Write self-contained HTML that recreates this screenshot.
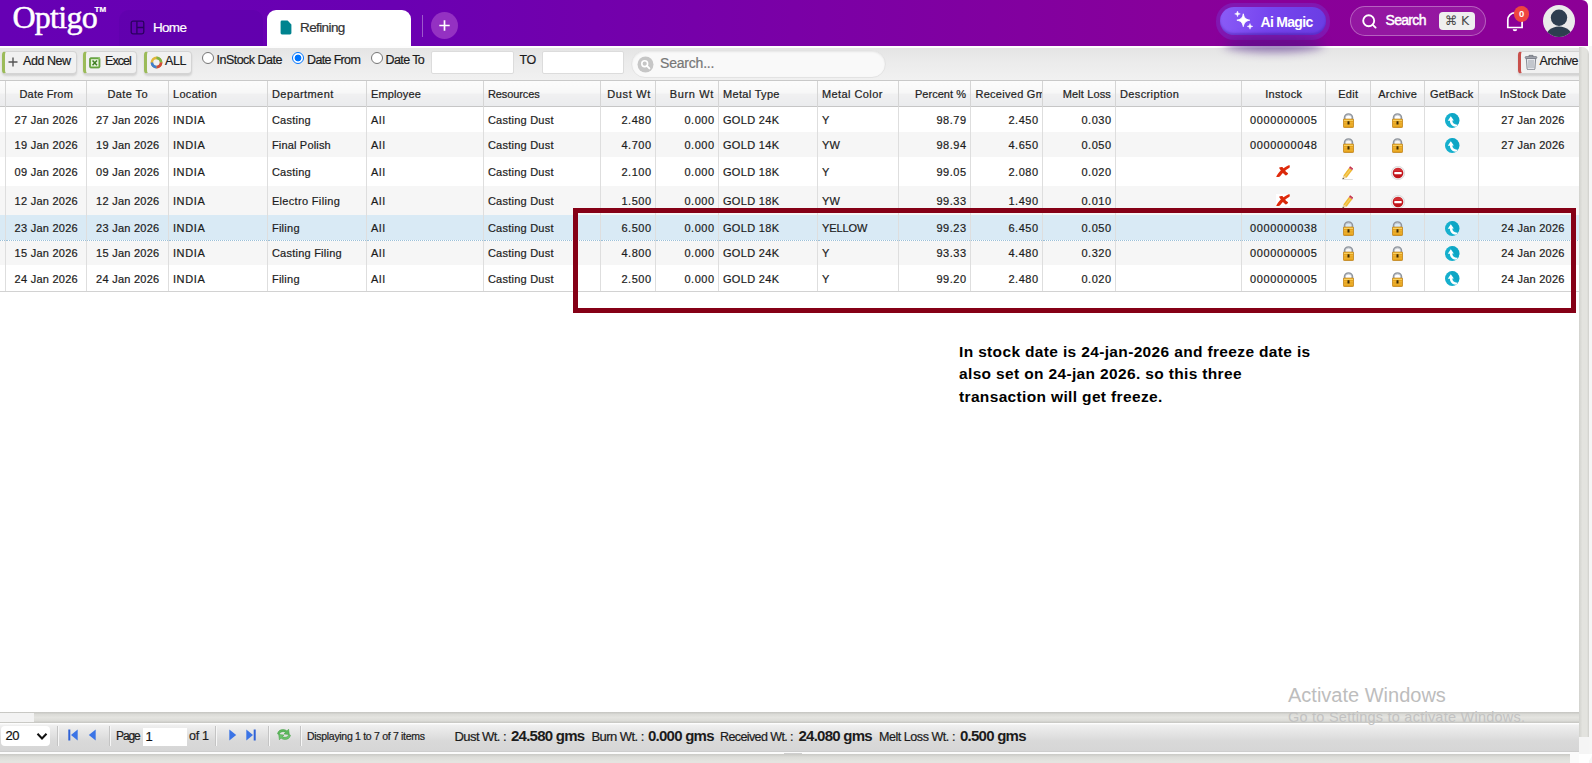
<!DOCTYPE html>
<html lang="en">
<head>
<meta charset="utf-8">
<title>Optigo - Refining</title>
<style>
*{box-sizing:border-box}
html,body{margin:0;padding:0}
body{width:1592px;height:763px;overflow:hidden;position:relative;background:#fff;font-family:"Liberation Sans",sans-serif;font-size:12px;color:#1c1c1c;letter-spacing:-0.28px;-webkit-text-stroke-width:0.2px}
.abs{position:absolute}
#hdr{position:absolute;left:0;top:0;width:1588px;height:46px;border-radius:0 6px 0 0;background:linear-gradient(90deg,#6600b4 0%,#6a00b2 25%,#7a00a6 50%,#88009a 75%,#8c0096 100%)}
#logo{position:absolute;left:12.500px;top:-5px;font-family:"Liberation Serif",serif;font-size:32px;color:#fff;letter-spacing:-0.75px;line-height:44px;-webkit-text-stroke:0.5px #fff}
#tm{position:absolute;left:94.500px;top:5px;font-size:8px;color:#fff;letter-spacing:0;font-weight:bold}
#hometab{position:absolute;left:119px;top:10px;width:144px;height:36px;background:rgba(80,0,160,.25);border-radius:10px 10px 0 0}
#hometxt{position:absolute;left:153px;top:20px;color:#fff;font-size:13.5px;letter-spacing:-0.7px;-webkit-text-stroke:0.2px #fff}
#reftab{position:absolute;left:267px;top:10px;width:144px;height:36px;background:#fff;border-radius:9px 9px 0 0}
#reftxt{position:absolute;left:300px;top:19.500px;color:#333;font-size:13.5px;letter-spacing:-0.6px}
#sep{position:absolute;left:422px;top:15px;width:1px;height:22px;background:rgba(255,255,255,.35)}
#plus{position:absolute;left:431px;top:12px;width:27px;height:27px;border-radius:50%;background:#9431c2}
#tb{position:absolute;left:0;top:46px;width:1579px;height:35px;background:linear-gradient(#e2e2e2 0,#e4e4e4 2px,#ebebeb 45%,#f1f1f1 100%);border-bottom:1px solid #c9c9c9}
.btn{position:absolute;top:50.500px;height:23px;background:#f1f1f1;border:1px solid #d4d4d4;border-left:3px solid #9bbb59;border-radius:4px;box-shadow:0 2px 2px rgba(0,0,0,.12);font-size:12.5px;line-height:20px;color:#1c1c1c;white-space:nowrap;letter-spacing:-0.45px}
.radio{position:absolute;top:52px;width:12px;height:12px;border:1px solid #767676;border-radius:50%;background:#fff}
.rlbl{position:absolute;top:52.500px;font-size:12.5px;color:#1c1c1c;white-space:nowrap;letter-spacing:-0.45px}
.inp{position:absolute;top:51px;height:23px;background:#fff;border:1px solid #dcdcdc;border-radius:2px}
#grid{position:absolute;left:0;top:81px;width:1579px;overflow:hidden}
table{border-collapse:collapse;table-layout:fixed;width:1586px}
th{height:26px;font-weight:normal;font-size:11px;color:#222;text-align:left;padding:.5px 0 0 4.500px;border-left:1px solid #d5d5d5;background:linear-gradient(#fcfcfc 0%,#f7f7f7 45%,#f0f0f1 52%,#eaebed 100%);box-shadow:inset 0 -1px 0 #c6c6c6;white-space:nowrap;overflow:hidden}
td{height:25px;padding:0 0 0 4.400px;border-left:1px solid #dedede;white-space:nowrap;overflow:hidden;font-size:11px}
th.c,td.c{text-align:center;padding:0 0 0 1.500px}
th.c{padding-top:.5px}
th.r,td.r{text-align:right;padding:0 3px 0 0}
th.r{padding:.5px 3.500px 0 0}
tr.alt td{background:#f6f6f6}
tr.sel td{background:#d9eaf5;border-bottom:1px dotted #9cc0d8;padding-top:2px}
tr.r6 td{padding-top:1px}
tr.tall td{height:29px}
tr.last td{height:26px;border-bottom:1px solid #d2d2d2;padding-top:2px}
th.rg{text-align:left;padding:.5px 0 0 5px}
#redbox{position:absolute;left:573px;top:208px;width:1003px;height:105px;border:5px solid #850016}
#note{position:absolute;left:959px;top:341px;font-family:"Liberation Sans",sans-serif;font-weight:bold;font-size:15.5px;line-height:22.4px;color:#000;letter-spacing:0.35px;white-space:nowrap;-webkit-text-stroke:0}
#vscroll{position:absolute;left:1579px;top:47px;width:10px;height:690px;background:linear-gradient(90deg,#d2d2ce 0,#e3e3df 35%,#e3e3df 80%,#cfcfcb 100%);border-radius:0 7px 0 0}
#hscroll{position:absolute;left:0;top:712px;width:1579px;height:11px;background:linear-gradient(#c4c4c0 0,#dbdbd7 22%,#e4e4e0 50%,#dcdcd8 78%,#c5c5c1 100%)}
#hthumb{position:absolute;left:0;top:713px;width:34px;height:9px;background:#f3f3f3}
#pager{position:absolute;left:0;top:723px;width:1579px;height:29px;background:linear-gradient(#fff 0,#fbfbfb 1px,#f0f0f0 2px,#e6e6e6 30%,#d9d9d9 62%,#d6d6d6 95%,#c9c9c9 100%)}
#bottom{position:absolute;left:0;top:752px;width:1579px;height:11px;background:#fbfbfb}
#bottom2{position:absolute;left:0;top:753.500px;width:1570px;height:10px;background:linear-gradient(#c8c8c4 0,#dcdcd8 30%,#e4e4e0 75%,#e4e4e0)}
#rstrip{position:absolute;left:1589px;top:46px;width:3px;height:717px;background:#f6f6f6}
.pt{position:absolute;white-space:nowrap}
.ic{display:block;margin:0 auto}
td.i{padding:1px 0 0 0}
td.f,th.f{border-left:none;padding:0}
svg.ic{position:relative}svg.lock{width:11px;height:15px;top:.4px;left:.5px}svg.gb{top:0;left:1.500px}svg.pen{top:.7px}svg.del{top:1px;left:1px}svg.xx{top:-1px;left:-.5px}svg.gb{width:14.400px;height:15px}svg.xx{width:14px;height:12.200px}svg.pen{width:11px;height:14px}svg.del{width:14px;height:14px}
#aihalo{position:absolute;left:1216px;top:3px;width:114px;height:36.500px;border-radius:18px;background:rgba(120,55,210,.42)}
#ai{position:absolute;left:1220px;top:7px;width:106px;height:28px;border-radius:14px;background:linear-gradient(100deg,#8b5cf6 0%,#7645ef 45%,#6a3de3 100%);box-shadow:inset 0 -2px 2px rgba(60,20,160,.35)}
#aitxt{position:absolute;left:40.500px;top:6.500px;color:#fff;font-weight:bold;font-size:14px;letter-spacing:-0.7px;white-space:nowrap;-webkit-text-stroke:0}
#aishadow{position:absolute;left:1224px;top:37px;width:100px;height:15px;border-radius:50%;background:rgba(70,20,130,.55);filter:blur(5px)}
#srch{position:absolute;left:1350px;top:6px;width:136px;height:30px;border-radius:15px;border:1px solid rgba(255,255,255,.32);background:rgba(255,255,255,.09)}
#srchtxt{position:absolute;left:34.500px;top:5px;color:#fff;font-size:14px;letter-spacing:-0.68px;white-space:nowrap;-webkit-text-stroke:0.45px #fff}
#kbd{position:absolute;left:88px;top:4.500px;width:36px;height:18px;border-radius:4px;background:#efefef;color:#4a4a4a;font-size:12.500px;line-height:18px;text-align:center;letter-spacing:-0.3px;-webkit-text-stroke:0;white-space:nowrap;font-family:"DejaVu Sans","Liberation Sans",sans-serif}
#badge{position:absolute;left:1514px;top:6.400px;width:15.200px;height:15.200px;border-radius:50%;background:#ee4540;color:#fff;font-weight:bold;font-size:9.500px;line-height:15px;text-align:center;letter-spacing:0;-webkit-text-stroke:0}
#hline{position:absolute;left:0;top:46px;width:1589px;height:2px;background:#fdfdfd}
.btn.red{border-left-color:#c9504c;border-radius:4px 0 0 4px}
.btn span{line-height:19px}
.radio.on{border:1px solid #0075ff;background:radial-gradient(circle,#0075ff 0,#0075ff 3.100px,#fff 3.700px)}
#sbox{position:absolute;left:630.500px;top:50px;width:255px;height:27.500px;border-radius:14px;background:#f9f9f9;border:1px solid #e3e3e3;box-shadow:inset 0 1px 2px rgba(0,0,0,.08)}
#sboxtxt{position:absolute;left:28.500px;top:4px;color:#777;font-size:14px;letter-spacing:-0.2px;white-space:nowrap}
#psel{position:absolute;left:1px;top:725.500px;width:49px;height:20.500px;background:#fff;border-radius:4px;font-size:13px;letter-spacing:-0.6px;color:#111}
.psep{position:absolute;top:726px;width:1px;height:20px;background:#c4c4c4;box-shadow:1px 0 0 #f6f6f6}
#pinp{position:absolute;left:142.500px;top:728px;width:44px;height:18px;background:#fff;font-size:13px;color:#111}
.pt{color:#1c1c1c;letter-spacing:-0.45px}
.pt.b{font-weight:bold;font-size:15px;letter-spacing:-0.75px;-webkit-text-stroke:0}
#aw1{position:absolute;left:1288px;top:684px;font-size:20px;color:#bdbdbd;letter-spacing:0;white-space:nowrap;-webkit-text-stroke:0}
#aw2{position:absolute;left:1288px;top:709px;font-size:14.5px;color:#c2c2c2;letter-spacing:0.24px;white-space:nowrap;-webkit-text-stroke:0}
#corner{position:absolute;left:1579px;top:737px;width:10px;height:17px;background:#f5f5f5}
#corner2{position:absolute;left:1579px;top:754px;width:13px;height:9px;background:#fff;border-radius:0 0 9px 0}
#bhandle{position:absolute;left:784px;top:752.500px;width:18px;height:1.500px;background:#cfcfcf}
</style>
</head>
<body>
<div id="hdr"></div>
<div id="logo">Optigo</div><div id="tm">TM</div>
<div id="hometab"></div>
<svg class="abs" style="left:130px;top:20px" width="15" height="15" viewBox="0 0 15 15"><rect x="1.2" y="1.2" width="12.600" height="12.600" rx="1.800" fill="none" stroke="#2b0060" stroke-width="1.300"/><path d="M6.900 1.200v12.600M6.900 7.500h6.900" fill="none" stroke="#2b0060" stroke-width="1.300"/></svg>
<div id="hometxt">Home</div>
<div id="reftab"></div>
<svg class="abs" style="left:280px;top:20px" width="12" height="15" viewBox="0 0 12 15"><path d="M2 .6h5.600L11.400 4.400V13a1.400 1.400 0 0 1-1.400 1.400H2A1.400 1.400 0 0 1 .6 13V2A1.400 1.400 0 0 1 2 .6z" fill="#00838f"/></svg>
<div id="reftxt">Refining</div>
<div id="sep"></div>
<div id="plus"><svg width="27" height="27" viewBox="0 0 27 27"><path d="M13.500 8.300v10.400M8.300 13.500h10.400" stroke="#fff" stroke-width="1.700" fill="none"/></svg></div>
<div id="aihalo"></div>
<div id="ai"><svg class="abs" style="left:13px;top:3px" width="22" height="22" viewBox="0 0 22 22"><path d="M10.300 3.800c.9 4.200 2.200 5.500 6.400 6.400-4.200.9-5.500 2.200-6.400 6.400-.9-4.200-2.200-5.500-6.400-6.400 4.200-.9 5.500-2.200 6.400-6.400z" fill="#fff" stroke="#fff" stroke-width=".9" stroke-linejoin="round"/><path d="M4.500 1.100c.4 1.900.9 2.400 2.800 2.800-1.900.4-2.400.9-2.800 2.800-.4-1.900-.9-2.400-2.800-2.800 1.900-.4 2.400-.9 2.800-2.800zM17 13.600c.4 1.900.9 2.400 2.800 2.800-1.900.4-2.400.9-2.800 2.800-.4-1.900-.9-2.400-2.800-2.800 1.900-.4 2.400-.9 2.800-2.800z" fill="#fff" stroke="#fff" stroke-width=".5" stroke-linejoin="round"/></svg><span id="aitxt">Ai Magic</span></div>
<div id="srch"><svg class="abs" style="left:10px;top:6px" width="18" height="18" viewBox="0 0 18 18"><circle cx="7.700" cy="7.700" r="5.500" fill="none" stroke="#fff" stroke-width="1.900"/><path d="M11.800 11.800 14.600 14.600" stroke="#fff" stroke-width="1.900" stroke-linecap="round"/></svg><span id="srchtxt">Search</span><span id="kbd">&#8984; K</span></div>
<svg class="abs" style="left:1505px;top:10px" width="22" height="23" viewBox="0 0 22 23"><path d="M2.800 17.500V9.900a7.150 7.150 0 0 1 14.300 0V17.500z" fill="none" stroke="#fff" stroke-width="1.700" stroke-linejoin="miter"/><path d="M7.700 19.300h4.500a2.250 1.900 0 0 1-4.500 0z" fill="#fff"/></svg>
<div id="badge">0</div>
<svg class="abs" style="left:1543px;top:5px" width="32" height="32" viewBox="0 0 32 32"><defs><clipPath id="avc"><circle cx="16" cy="16" r="16"/></clipPath></defs><circle cx="16" cy="16" r="16" fill="#ebebeb"/><g clip-path="url(#avc)" fill="#2d3e50"><circle cx="16" cy="12.700" r="8.200"/><ellipse cx="16" cy="33.800" rx="14" ry="12.300"/></g></svg>
<div id="tb"></div>
<div id="hline"></div>
<div id="aishadow"></div>
<div class="btn" style="left:2px;width:75px"><svg class="abs" style="left:2.200px;top:4px" width="12" height="12" viewBox="0 0 12 12"><path d="M6 1.500v9M1.500 6h9" stroke="#555" stroke-width="1.400" fill="none"/></svg><span class="abs" style="left:18px;top:0">Add New</span></div>
<div class="btn" style="left:83px;width:54px"><svg class="abs" style="left:3px;top:4px" width="11.500" height="13" viewBox="0 0 13 14"><rect x=".6" y="1.600" width="11.800" height="11.600" rx="1.600" fill="#6fae45" stroke="#4f8d2e" stroke-width=".8"/><rect x="2.300" y="3.300" width="8.400" height="8.200" fill="#e9f3e0"/><path d="M4 4.800 9 10.200M9 4.800 4 10.200" stroke="#3f7d24" stroke-width="1.700"/><path d="M9.500 1.600 12.400 0.800v3z" fill="#8fc56a"/></svg><span class="abs" style="left:19px;top:0;letter-spacing:-0.95px">Excel</span></div>
<div class="btn" style="left:144px;width:48px"><svg class="abs" style="left:3px;top:4px" width="13" height="13" viewBox="0 0 13 13"><circle cx="6.500" cy="6.500" r="4.600" fill="none" stroke="#e2b73a" stroke-width="2.600"/><path d="M6.500 1.900a4.600 4.600 0 0 1 4.600 4.600" fill="none" stroke="#7fb347" stroke-width="2.600"/><path d="M11.100 6.500a4.600 4.600 0 0 1-4.600 4.600" fill="none" stroke="#d24a3a" stroke-width="2.600"/><path d="M6.500 11.100a4.600 4.600 0 0 1-4.600-4.600" fill="none" stroke="#3f7fd0" stroke-width="2.600"/></svg><span class="abs" style="left:18px;top:0">ALL</span></div>
<div class="radio" style="left:202px"></div><div class="rlbl" style="left:216.500px;letter-spacing:-0.52px">InStock Date</div>
<div class="radio on" style="left:292px"></div><div class="rlbl" style="left:307px;letter-spacing:-0.65px">Date From</div>
<div class="radio" style="left:370.500px"></div><div class="rlbl" style="left:385.500px;letter-spacing:-0.6px">Date To</div>
<div class="inp" style="left:430.500px;width:83px"></div>
<div class="rlbl" style="left:519.500px">TO</div>
<div class="inp" style="left:541.500px;width:82px"></div>
<div id="sbox"><svg class="abs" style="left:5px;top:5px" width="17" height="17" viewBox="0 0 17 17"><circle cx="8.500" cy="8.500" r="8" fill="#c6c6c6"/><circle cx="7.700" cy="7.700" r="2.900" fill="none" stroke="#fff" stroke-width="1.600"/><path d="M9.900 9.900 12.400 12.400" stroke="#fff" stroke-width="1.900" stroke-linecap="round"/></svg><span id="sboxtxt">Search...</span></div>
<div class="btn red" style="left:1518px;width:66px"><svg class="abs" style="left:3px;top:2px" width="14" height="16" viewBox="0 0 14 16"><path d="M2.300 4.200h9.400l-.8 10.600a1 1 0 0 1-1 .9H4.100a1 1 0 0 1-1-.9z" fill="#e3e5ea" stroke="#7b808a" stroke-width=".9"/><path d="M5 6v8M7 6v8M9 6v8" stroke="#9a9fa9" stroke-width=".9"/><rect x="1.200" y="2.600" width="11.600" height="1.800" rx=".7" fill="#a9adb5" stroke="#6a6f78" stroke-width=".7"/><path d="M5 2.600V1.400h4v1.200" fill="none" stroke="#6a6f78" stroke-width=".9"/></svg><span class="abs" style="left:18.500px;top:0">Archive</span></div>
<div id="grid"><table><colgroup><col style="width:5px"><col style="width:81px"><col style="width:82px"><col style="width:99px"><col style="width:99px"><col style="width:117px"><col style="width:117px"><col style="width:55px"><col style="width:63px"><col style="width:99px"><col style="width:81px"><col style="width:72px"><col style="width:72px"><col style="width:73px"><col style="width:126px"><col style="width:84px"><col style="width:45px"><col style="width:54px"><col style="width:54px"><col style="width:108px"></colgroup><thead><tr><th class="f"></th><th class="c"><span style="letter-spacing:0.17px">Date From</span></th><th class="c"><span style="letter-spacing:0.42px">Date To</span></th><th><span style="letter-spacing:0.31px">Location</span></th><th><span style="letter-spacing:0.42px">Department</span></th><th><span style="letter-spacing:0.12px">Employee</span></th><th><span style="letter-spacing:-0.10px">Resources</span></th><th class="r"><span style="letter-spacing:0.68px">Dust Wt</span></th><th class="r"><span style="letter-spacing:0.66px">Burn Wt</span></th><th><span style="letter-spacing:0.32px">Metal Type</span></th><th><span style="letter-spacing:0.41px">Metal Color</span></th><th class="r"><span style="letter-spacing:0.04px">Percent %</span></th><th class="r rg"><span style="letter-spacing:0.27px">Received Gm</span></th><th class="r"><span style="letter-spacing:0.14px">Melt Loss</span></th><th><span style="letter-spacing:0.38px">Description</span></th><th class="c"><span style="letter-spacing:0.33px">Instock</span></th><th class="c"><span style="letter-spacing:0.32px">Edit</span></th><th class="c"><span style="letter-spacing:0.35px">Archive</span></th><th class="c"><span style="letter-spacing:0.19px">GetBack</span></th><th class="c"><span style="letter-spacing:0.28px">InStock Date</span></th></tr></thead><tbody><tr><td class="f"></td><td class="c"><span style="letter-spacing:0.25px">27 Jan 2026</span></td><td class="c"><span style="letter-spacing:0.25px">27 Jan 2026</span></td><td><span style="letter-spacing:0.67px">INDIA</span></td><td><span style="letter-spacing:0.25px">Casting</span></td><td><span style="letter-spacing:0.89px">All</span></td><td><span style="letter-spacing:0.24px">Casting Dust</span></td><td class="r"><span style="letter-spacing:0.49px">2.480</span></td><td class="r"><span style="letter-spacing:0.49px">0.000</span></td><td><span style="letter-spacing:0.34px">GOLD 24K</span></td><td><span style="letter-spacing:0.27px">Y</span></td><td class="r"><span style="letter-spacing:0.49px">98.79</span></td><td class="r"><span style="letter-spacing:0.49px">2.450</span></td><td class="r"><span style="letter-spacing:0.49px">0.030</span></td><td></td><td class="c"><span style="letter-spacing:0.61px">0000000005</span></td><td class="i"><svg class="ic lock" viewBox="0 0 11 15"><path d="M1.700 7V5a3.800 3.800 0 0 1 7.600 0V7" fill="none" stroke="#8f959d" stroke-width="2"/><path d="M2.300 7V5a3.200 3.200 0 0 1 6.400 0V7" fill="none" stroke="#d5d9de" stroke-width=".7"/><rect x=".4" y="6.100" width="10.200" height="8.400" rx=".8" fill="#e6a21b" stroke="#b9790c" stroke-width=".7"/><rect x="1" y="6.700" width="9" height="1.300" fill="#f6cf62"/><rect x="1" y="9.300" width="9" height="1" fill="#f2c046" opacity=".8"/><rect x="1" y="11.600" width="9" height="1" fill="#f2c046" opacity=".7"/><rect x="4.500" y="8.300" width="2" height="3.300" rx=".3" fill="#3d2a05"/></svg></td><td class="i"><svg class="ic lock" viewBox="0 0 11 15"><path d="M1.700 7V5a3.800 3.800 0 0 1 7.600 0V7" fill="none" stroke="#8f959d" stroke-width="2"/><path d="M2.300 7V5a3.200 3.200 0 0 1 6.400 0V7" fill="none" stroke="#d5d9de" stroke-width=".7"/><rect x=".4" y="6.100" width="10.200" height="8.400" rx=".8" fill="#e6a21b" stroke="#b9790c" stroke-width=".7"/><rect x="1" y="6.700" width="9" height="1.300" fill="#f6cf62"/><rect x="1" y="9.300" width="9" height="1" fill="#f2c046" opacity=".8"/><rect x="1" y="11.600" width="9" height="1" fill="#f2c046" opacity=".7"/><rect x="4.500" y="8.300" width="2" height="3.300" rx=".3" fill="#3d2a05"/></svg></td><td class="i"><svg class="ic gb" viewBox="0 0 14.400 15"><ellipse cx="7.200" cy="7.500" rx="7.200" ry="7.500" fill="#15afcd"/><path d="M7.200 0a7.200 7.500 0 0 1 7.200 7.500 7.200 7.500 0 0 1-2 5.200L5 1z" fill="#0a9fc0" opacity=".55"/><path d="M5.800 3.300 2.800 7.700H4.900C4.900 10.600 6.500 12.900 10.300 13.800 11.500 13.300 12.300 12.600 12.900 11.700 9.500 12 7.400 10.400 7.300 7.600H8.800Z" fill="#fff"/></svg></td><td class="c"><span style="letter-spacing:0.25px">27 Jan 2026</span></td></tr>
<tr class="alt"><td class="f"></td><td class="c"><span style="letter-spacing:0.25px">19 Jan 2026</span></td><td class="c"><span style="letter-spacing:0.25px">19 Jan 2026</span></td><td><span style="letter-spacing:0.67px">INDIA</span></td><td><span style="letter-spacing:0.18px">Final Polish</span></td><td><span style="letter-spacing:0.89px">All</span></td><td><span style="letter-spacing:0.24px">Casting Dust</span></td><td class="r"><span style="letter-spacing:0.49px">4.700</span></td><td class="r"><span style="letter-spacing:0.49px">0.000</span></td><td><span style="letter-spacing:0.34px">GOLD 14K</span></td><td><span style="letter-spacing:0.27px">YW</span></td><td class="r"><span style="letter-spacing:0.49px">98.94</span></td><td class="r"><span style="letter-spacing:0.49px">4.650</span></td><td class="r"><span style="letter-spacing:0.49px">0.050</span></td><td></td><td class="c"><span style="letter-spacing:0.61px">0000000048</span></td><td class="i"><svg class="ic lock" viewBox="0 0 11 15"><path d="M1.700 7V5a3.800 3.800 0 0 1 7.600 0V7" fill="none" stroke="#8f959d" stroke-width="2"/><path d="M2.300 7V5a3.200 3.200 0 0 1 6.400 0V7" fill="none" stroke="#d5d9de" stroke-width=".7"/><rect x=".4" y="6.100" width="10.200" height="8.400" rx=".8" fill="#e6a21b" stroke="#b9790c" stroke-width=".7"/><rect x="1" y="6.700" width="9" height="1.300" fill="#f6cf62"/><rect x="1" y="9.300" width="9" height="1" fill="#f2c046" opacity=".8"/><rect x="1" y="11.600" width="9" height="1" fill="#f2c046" opacity=".7"/><rect x="4.500" y="8.300" width="2" height="3.300" rx=".3" fill="#3d2a05"/></svg></td><td class="i"><svg class="ic lock" viewBox="0 0 11 15"><path d="M1.700 7V5a3.800 3.800 0 0 1 7.600 0V7" fill="none" stroke="#8f959d" stroke-width="2"/><path d="M2.300 7V5a3.200 3.200 0 0 1 6.400 0V7" fill="none" stroke="#d5d9de" stroke-width=".7"/><rect x=".4" y="6.100" width="10.200" height="8.400" rx=".8" fill="#e6a21b" stroke="#b9790c" stroke-width=".7"/><rect x="1" y="6.700" width="9" height="1.300" fill="#f6cf62"/><rect x="1" y="9.300" width="9" height="1" fill="#f2c046" opacity=".8"/><rect x="1" y="11.600" width="9" height="1" fill="#f2c046" opacity=".7"/><rect x="4.500" y="8.300" width="2" height="3.300" rx=".3" fill="#3d2a05"/></svg></td><td class="i"><svg class="ic gb" viewBox="0 0 14.400 15"><ellipse cx="7.200" cy="7.500" rx="7.200" ry="7.500" fill="#15afcd"/><path d="M7.200 0a7.200 7.500 0 0 1 7.200 7.500 7.200 7.500 0 0 1-2 5.200L5 1z" fill="#0a9fc0" opacity=".55"/><path d="M5.800 3.300 2.800 7.700H4.900C4.900 10.600 6.500 12.900 10.300 13.800 11.500 13.300 12.300 12.600 12.900 11.700 9.500 12 7.400 10.400 7.300 7.600H8.800Z" fill="#fff"/></svg></td><td class="c"><span style="letter-spacing:0.25px">27 Jan 2026</span></td></tr>
<tr class="tall"><td class="f"></td><td class="c"><span style="letter-spacing:0.25px">09 Jan 2026</span></td><td class="c"><span style="letter-spacing:0.25px">09 Jan 2026</span></td><td><span style="letter-spacing:0.67px">INDIA</span></td><td><span style="letter-spacing:0.25px">Casting</span></td><td><span style="letter-spacing:0.89px">All</span></td><td><span style="letter-spacing:0.24px">Casting Dust</span></td><td class="r"><span style="letter-spacing:0.49px">2.100</span></td><td class="r"><span style="letter-spacing:0.49px">0.000</span></td><td><span style="letter-spacing:0.34px">GOLD 18K</span></td><td><span style="letter-spacing:0.27px">Y</span></td><td class="r"><span style="letter-spacing:0.49px">99.05</span></td><td class="r"><span style="letter-spacing:0.49px">2.080</span></td><td class="r"><span style="letter-spacing:0.49px">0.020</span></td><td></td><td class="i"><svg class="ic xx" viewBox="0 0 15 13"><rect x="0" y="0" width="15" height="13" fill="#fff"/><path d="M.2 12.800C2.200 8.200 8 2.400 14.300.1 14.900.9 14.900 2 14.400 2.800 10.400 5 6.400 8.900 4.200 12.300 2.800 13 1.200 13.100.2 12.800Z" fill="#e02a0b"/><path d="M3.200 3C4.400 2.100 6 1.900 7.200 2.300 8.200 4.500 10.300 6.900 13 8.900 12.800 10.100 11.600 11.100 10.300 11.200 7.600 9.100 4.800 6 3.200 3Z" fill="#d9290b"/></svg></td><td class="i"><svg class="ic pen" viewBox="0 0 11 14"><path d="M6.900 1.900 10.300 4.300 4.600 11.800 1.300 9.500Z" fill="#eeb730"/><path d="M8 2.700 9.200 3.500 3.500 11 2.400 10.200Z" fill="#f7d36c" opacity=".8"/><path d="M6.900 1.900 8.100.3 11 2.500 10.300 4.300Z" fill="#bf1f3a"/><path d="M7.300 1.400 10.500 3.700" stroke="#e9a0aa" stroke-width=".6"/><path d="M1.300 9.500 4.600 11.800.5 13.200Z" fill="#e9cf9a"/><path d="M.5 13.200.9 11.700 2.100 12.600Z" fill="#2a2a2a"/><rect x=".4" y="13.300" width="10.400" height=".7" fill="#cfcfcf"/></svg></td><td class="i"><svg class="ic del" viewBox="0 0 14 14"><circle cx="7" cy="7" r="6.700" fill="#efefef" stroke="#cfcfcf" stroke-width=".6"/><circle cx="7" cy="7" r="5.300" fill="#c2151b"/><path d="M2.300 5.400a5 5 0 0 1 9.400 0z" fill="#d8383c" opacity=".7"/><rect x="3.300" y="5.900" width="7.400" height="2.300" rx=".4" fill="#fff"/></svg></td><td class="c"></td><td class="c"></td></tr>
<tr class="alt tall"><td class="f"></td><td class="c"><span style="letter-spacing:0.25px">12 Jan 2026</span></td><td class="c"><span style="letter-spacing:0.25px">12 Jan 2026</span></td><td><span style="letter-spacing:0.67px">INDIA</span></td><td><span style="letter-spacing:0.33px">Electro Filing</span></td><td><span style="letter-spacing:0.89px">All</span></td><td><span style="letter-spacing:0.24px">Casting Dust</span></td><td class="r"><span style="letter-spacing:0.49px">1.500</span></td><td class="r"><span style="letter-spacing:0.49px">0.000</span></td><td><span style="letter-spacing:0.34px">GOLD 18K</span></td><td><span style="letter-spacing:0.27px">YW</span></td><td class="r"><span style="letter-spacing:0.49px">99.33</span></td><td class="r"><span style="letter-spacing:0.49px">1.490</span></td><td class="r"><span style="letter-spacing:0.49px">0.010</span></td><td></td><td class="i"><svg class="ic xx" viewBox="0 0 15 13"><rect x="0" y="0" width="15" height="13" fill="#fff"/><path d="M.2 12.800C2.200 8.200 8 2.400 14.300.1 14.900.9 14.900 2 14.400 2.800 10.400 5 6.400 8.900 4.200 12.300 2.800 13 1.200 13.100.2 12.800Z" fill="#e02a0b"/><path d="M3.200 3C4.400 2.100 6 1.900 7.200 2.300 8.200 4.500 10.300 6.900 13 8.900 12.800 10.100 11.600 11.100 10.300 11.200 7.600 9.100 4.800 6 3.200 3Z" fill="#d9290b"/></svg></td><td class="i"><svg class="ic pen" viewBox="0 0 11 14"><path d="M6.900 1.900 10.300 4.300 4.600 11.800 1.300 9.500Z" fill="#eeb730"/><path d="M8 2.700 9.200 3.500 3.500 11 2.400 10.200Z" fill="#f7d36c" opacity=".8"/><path d="M6.900 1.900 8.100.3 11 2.500 10.300 4.300Z" fill="#bf1f3a"/><path d="M7.300 1.400 10.500 3.700" stroke="#e9a0aa" stroke-width=".6"/><path d="M1.300 9.500 4.600 11.800.5 13.200Z" fill="#e9cf9a"/><path d="M.5 13.200.9 11.700 2.100 12.600Z" fill="#2a2a2a"/><rect x=".4" y="13.300" width="10.400" height=".7" fill="#cfcfcf"/></svg></td><td class="i"><svg class="ic del" viewBox="0 0 14 14"><circle cx="7" cy="7" r="6.700" fill="#efefef" stroke="#cfcfcf" stroke-width=".6"/><circle cx="7" cy="7" r="5.300" fill="#c2151b"/><path d="M2.300 5.400a5 5 0 0 1 9.400 0z" fill="#d8383c" opacity=".7"/><rect x="3.300" y="5.900" width="7.400" height="2.300" rx=".4" fill="#fff"/></svg></td><td class="c"></td><td class="c"></td></tr>
<tr class="sel"><td class="f"></td><td class="c"><span style="letter-spacing:0.25px">23 Jan 2026</span></td><td class="c"><span style="letter-spacing:0.25px">23 Jan 2026</span></td><td><span style="letter-spacing:0.67px">INDIA</span></td><td><span style="letter-spacing:0.27px">Filing</span></td><td><span style="letter-spacing:0.89px">All</span></td><td><span style="letter-spacing:0.24px">Casting Dust</span></td><td class="r"><span style="letter-spacing:0.49px">6.500</span></td><td class="r"><span style="letter-spacing:0.49px">0.000</span></td><td><span style="letter-spacing:0.34px">GOLD 18K</span></td><td><span style="letter-spacing:-0.05px">YELLOW</span></td><td class="r"><span style="letter-spacing:0.49px">99.23</span></td><td class="r"><span style="letter-spacing:0.49px">6.450</span></td><td class="r"><span style="letter-spacing:0.49px">0.050</span></td><td></td><td class="c"><span style="letter-spacing:0.61px">0000000038</span></td><td class="i"><svg class="ic lock" viewBox="0 0 11 15"><path d="M1.700 7V5a3.800 3.800 0 0 1 7.600 0V7" fill="none" stroke="#8f959d" stroke-width="2"/><path d="M2.300 7V5a3.200 3.200 0 0 1 6.400 0V7" fill="none" stroke="#d5d9de" stroke-width=".7"/><rect x=".4" y="6.100" width="10.200" height="8.400" rx=".8" fill="#e6a21b" stroke="#b9790c" stroke-width=".7"/><rect x="1" y="6.700" width="9" height="1.300" fill="#f6cf62"/><rect x="1" y="9.300" width="9" height="1" fill="#f2c046" opacity=".8"/><rect x="1" y="11.600" width="9" height="1" fill="#f2c046" opacity=".7"/><rect x="4.500" y="8.300" width="2" height="3.300" rx=".3" fill="#3d2a05"/></svg></td><td class="i"><svg class="ic lock" viewBox="0 0 11 15"><path d="M1.700 7V5a3.800 3.800 0 0 1 7.600 0V7" fill="none" stroke="#8f959d" stroke-width="2"/><path d="M2.300 7V5a3.200 3.200 0 0 1 6.400 0V7" fill="none" stroke="#d5d9de" stroke-width=".7"/><rect x=".4" y="6.100" width="10.200" height="8.400" rx=".8" fill="#e6a21b" stroke="#b9790c" stroke-width=".7"/><rect x="1" y="6.700" width="9" height="1.300" fill="#f6cf62"/><rect x="1" y="9.300" width="9" height="1" fill="#f2c046" opacity=".8"/><rect x="1" y="11.600" width="9" height="1" fill="#f2c046" opacity=".7"/><rect x="4.500" y="8.300" width="2" height="3.300" rx=".3" fill="#3d2a05"/></svg></td><td class="i"><svg class="ic gb" viewBox="0 0 14.400 15"><ellipse cx="7.200" cy="7.500" rx="7.200" ry="7.500" fill="#15afcd"/><path d="M7.200 0a7.200 7.500 0 0 1 7.200 7.500 7.200 7.500 0 0 1-2 5.200L5 1z" fill="#0a9fc0" opacity=".55"/><path d="M5.800 3.300 2.800 7.700H4.900C4.900 10.600 6.500 12.900 10.300 13.800 11.500 13.300 12.300 12.600 12.900 11.700 9.500 12 7.400 10.400 7.300 7.600H8.800Z" fill="#fff"/></svg></td><td class="c"><span style="letter-spacing:0.25px">24 Jan 2026</span></td></tr>
<tr class="alt r6"><td class="f"></td><td class="c"><span style="letter-spacing:0.25px">15 Jan 2026</span></td><td class="c"><span style="letter-spacing:0.25px">15 Jan 2026</span></td><td><span style="letter-spacing:0.67px">INDIA</span></td><td><span style="letter-spacing:0.24px">Casting Filing</span></td><td><span style="letter-spacing:0.89px">All</span></td><td><span style="letter-spacing:0.24px">Casting Dust</span></td><td class="r"><span style="letter-spacing:0.49px">4.800</span></td><td class="r"><span style="letter-spacing:0.49px">0.000</span></td><td><span style="letter-spacing:0.34px">GOLD 24K</span></td><td><span style="letter-spacing:0.27px">Y</span></td><td class="r"><span style="letter-spacing:0.49px">93.33</span></td><td class="r"><span style="letter-spacing:0.49px">4.480</span></td><td class="r"><span style="letter-spacing:0.49px">0.320</span></td><td></td><td class="c"><span style="letter-spacing:0.61px">0000000005</span></td><td class="i"><svg class="ic lock" viewBox="0 0 11 15"><path d="M1.700 7V5a3.800 3.800 0 0 1 7.600 0V7" fill="none" stroke="#8f959d" stroke-width="2"/><path d="M2.300 7V5a3.200 3.200 0 0 1 6.400 0V7" fill="none" stroke="#d5d9de" stroke-width=".7"/><rect x=".4" y="6.100" width="10.200" height="8.400" rx=".8" fill="#e6a21b" stroke="#b9790c" stroke-width=".7"/><rect x="1" y="6.700" width="9" height="1.300" fill="#f6cf62"/><rect x="1" y="9.300" width="9" height="1" fill="#f2c046" opacity=".8"/><rect x="1" y="11.600" width="9" height="1" fill="#f2c046" opacity=".7"/><rect x="4.500" y="8.300" width="2" height="3.300" rx=".3" fill="#3d2a05"/></svg></td><td class="i"><svg class="ic lock" viewBox="0 0 11 15"><path d="M1.700 7V5a3.800 3.800 0 0 1 7.600 0V7" fill="none" stroke="#8f959d" stroke-width="2"/><path d="M2.300 7V5a3.200 3.200 0 0 1 6.400 0V7" fill="none" stroke="#d5d9de" stroke-width=".7"/><rect x=".4" y="6.100" width="10.200" height="8.400" rx=".8" fill="#e6a21b" stroke="#b9790c" stroke-width=".7"/><rect x="1" y="6.700" width="9" height="1.300" fill="#f6cf62"/><rect x="1" y="9.300" width="9" height="1" fill="#f2c046" opacity=".8"/><rect x="1" y="11.600" width="9" height="1" fill="#f2c046" opacity=".7"/><rect x="4.500" y="8.300" width="2" height="3.300" rx=".3" fill="#3d2a05"/></svg></td><td class="i"><svg class="ic gb" viewBox="0 0 14.400 15"><ellipse cx="7.200" cy="7.500" rx="7.200" ry="7.500" fill="#15afcd"/><path d="M7.200 0a7.200 7.500 0 0 1 7.200 7.500 7.200 7.500 0 0 1-2 5.200L5 1z" fill="#0a9fc0" opacity=".55"/><path d="M5.800 3.300 2.800 7.700H4.900C4.900 10.600 6.500 12.900 10.300 13.800 11.500 13.300 12.300 12.600 12.900 11.700 9.500 12 7.400 10.400 7.300 7.600H8.800Z" fill="#fff"/></svg></td><td class="c"><span style="letter-spacing:0.25px">24 Jan 2026</span></td></tr>
<tr class="last"><td class="f"></td><td class="c"><span style="letter-spacing:0.25px">24 Jan 2026</span></td><td class="c"><span style="letter-spacing:0.25px">24 Jan 2026</span></td><td><span style="letter-spacing:0.67px">INDIA</span></td><td><span style="letter-spacing:0.27px">Filing</span></td><td><span style="letter-spacing:0.89px">All</span></td><td><span style="letter-spacing:0.24px">Casting Dust</span></td><td class="r"><span style="letter-spacing:0.49px">2.500</span></td><td class="r"><span style="letter-spacing:0.49px">0.000</span></td><td><span style="letter-spacing:0.34px">GOLD 24K</span></td><td><span style="letter-spacing:0.27px">Y</span></td><td class="r"><span style="letter-spacing:0.49px">99.20</span></td><td class="r"><span style="letter-spacing:0.49px">2.480</span></td><td class="r"><span style="letter-spacing:0.49px">0.020</span></td><td></td><td class="c"><span style="letter-spacing:0.61px">0000000005</span></td><td class="i"><svg class="ic lock" viewBox="0 0 11 15"><path d="M1.700 7V5a3.800 3.800 0 0 1 7.600 0V7" fill="none" stroke="#8f959d" stroke-width="2"/><path d="M2.300 7V5a3.200 3.200 0 0 1 6.400 0V7" fill="none" stroke="#d5d9de" stroke-width=".7"/><rect x=".4" y="6.100" width="10.200" height="8.400" rx=".8" fill="#e6a21b" stroke="#b9790c" stroke-width=".7"/><rect x="1" y="6.700" width="9" height="1.300" fill="#f6cf62"/><rect x="1" y="9.300" width="9" height="1" fill="#f2c046" opacity=".8"/><rect x="1" y="11.600" width="9" height="1" fill="#f2c046" opacity=".7"/><rect x="4.500" y="8.300" width="2" height="3.300" rx=".3" fill="#3d2a05"/></svg></td><td class="i"><svg class="ic lock" viewBox="0 0 11 15"><path d="M1.700 7V5a3.800 3.800 0 0 1 7.600 0V7" fill="none" stroke="#8f959d" stroke-width="2"/><path d="M2.300 7V5a3.200 3.200 0 0 1 6.400 0V7" fill="none" stroke="#d5d9de" stroke-width=".7"/><rect x=".4" y="6.100" width="10.200" height="8.400" rx=".8" fill="#e6a21b" stroke="#b9790c" stroke-width=".7"/><rect x="1" y="6.700" width="9" height="1.300" fill="#f6cf62"/><rect x="1" y="9.300" width="9" height="1" fill="#f2c046" opacity=".8"/><rect x="1" y="11.600" width="9" height="1" fill="#f2c046" opacity=".7"/><rect x="4.500" y="8.300" width="2" height="3.300" rx=".3" fill="#3d2a05"/></svg></td><td class="i"><svg class="ic gb" viewBox="0 0 14.400 15"><ellipse cx="7.200" cy="7.500" rx="7.200" ry="7.500" fill="#15afcd"/><path d="M7.200 0a7.200 7.500 0 0 1 7.200 7.500 7.200 7.500 0 0 1-2 5.200L5 1z" fill="#0a9fc0" opacity=".55"/><path d="M5.800 3.300 2.800 7.700H4.900C4.900 10.600 6.500 12.900 10.300 13.800 11.500 13.300 12.300 12.600 12.900 11.700 9.500 12 7.400 10.400 7.300 7.600H8.800Z" fill="#fff"/></svg></td><td class="c"><span style="letter-spacing:0.25px">24 Jan 2026</span></td></tr>
</tbody></table></div><!--g-->
<div id="redbox"></div>
<div id="note">In stock date is 24-jan-2026 and freeze date is<br>also set on 24-jan 2026. so this three<br>transaction will get freeze.</div>
<div id="vscroll"></div>
<div id="hscroll"></div><div id="hthumb"></div>
<div id="pager"></div>
<div id="bottom"></div><div id="bottom2"></div><div id="rstrip"></div>
<div id="bhandle"></div>
<div id="corner"></div><div id="corner2"></div>
<div id="psel"><span class="abs" style="left:4.500px;top:2.500px">20</span><svg class="abs" style="left:35px;top:6px" width="12" height="9" viewBox="0 0 12 9"><path d="M1.500 1.700 6 6.500 10.500 1.700" fill="none" stroke="#111" stroke-width="2"/></svg></div>
<div class="psep" style="left:57px"></div>
<svg class="abs" style="left:68px;top:729px" width="10" height="12" viewBox="0 0 10 12"><rect x=".3" y=".5" width="2" height="11" fill="#2f62d6"/><path d="M9.700 .5v11L3 6z" fill="#3b74e6"/></svg>
<svg class="abs" style="left:88px;top:729px" width="8" height="12" viewBox="0 0 8 12"><path d="M7.700 .5v11L.8 6z" fill="#3b74e6"/></svg>
<div class="psep" style="left:108.500px"></div>
<div class="pt" style="left:116px;top:728.500px;font-size:12px;letter-spacing:-1.1px">Page</div>
<div id="pinp"><span class="abs" style="left:3px;top:0.500px">1</span></div>
<div class="pt" style="left:189px;top:728.500px;font-size:12.5px;letter-spacing:-0.3px">of 1</div>
<div class="psep" style="left:214.500px"></div>
<svg class="abs" style="left:229px;top:729px" width="8" height="12" viewBox="0 0 8 12"><path d="M.3 .5v11L7.200 6z" fill="#3b74e6"/></svg>
<svg class="abs" style="left:246px;top:729px" width="10" height="12" viewBox="0 0 10 12"><rect x="7.700" y=".5" width="2" height="11" fill="#2f62d6"/><path d="M.3 .5v11L7 6z" fill="#3b74e6"/></svg>
<div class="psep" style="left:267.500px"></div>
<svg class="abs" style="left:276px;top:727px" width="16" height="15" viewBox="0 0 16 15"><path d="M1.500 6.800C2 3.800 4.600 2.300 7.600 2.600c1.400.1 2.500.6 3.400 1.400l1.600-1.800.7 5.400-5.300-.6 1.600-1.600C8.300 4.500 6.300 4.300 4.800 5.300c-.8.500-1.300 1.300-1.500 2.200z" fill="#5cb85c" stroke="#3f9b3f" stroke-width=".5"/><path d="M14.500 8.200c-.5 3-3.100 4.500-6.100 4.200-1.400-.1-2.500-.6-3.400-1.400l-1.600 1.800-.7-5.400 5.300.6-1.600 1.600c1.300.9 3.300 1.100 4.800.1.800-.5 1.300-1.300 1.500-2.200z" fill="#6cc46c" stroke="#3f9b3f" stroke-width=".5"/></svg>
<div class="psep" style="left:299.500px"></div>
<div class="pt" style="left:307px;top:729.500px;font-size:10.5px;letter-spacing:-0.3px">Displaying 1 to 7 of 7 items</div>
<div class="pt" style="left:454.500px;top:729px;font-size:13px;letter-spacing:-0.55px">Dust Wt. :</div>
<div class="pt b" style="left:511px;top:727px">24.580 gms</div>
<div class="pt" style="left:591.500px;top:729px;font-size:13px;letter-spacing:-0.55px">Burn Wt. :</div>
<div class="pt b" style="left:648px;top:727px">0.000 gms</div>
<div class="pt" style="left:720px;top:729.500px;font-size:12.5px;letter-spacing:-0.6px">Received Wt. :</div>
<div class="pt b" style="left:798.500px;top:727px">24.080 gms</div>
<div class="pt" style="left:879px;top:729.500px;font-size:12.5px;letter-spacing:-0.45px">Melt Loss Wt. :</div>
<div class="pt b" style="left:960px;top:727px">0.500 gms</div>
<div id="aw1">Activate Windows</div>
<div id="aw2">Go to Settings to activate Windows.</div>
</body>
</html>
